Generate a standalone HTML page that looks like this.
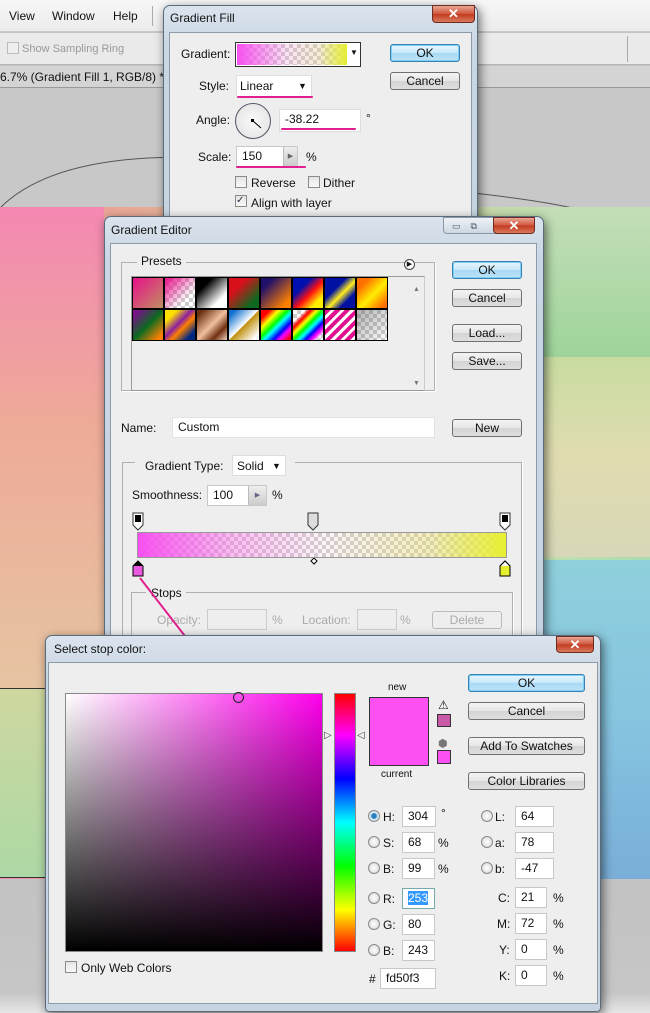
<!DOCTYPE html>
<html><head><meta charset="utf-8"><style>
*{margin:0;padding:0;box-sizing:border-box}
body{width:650px;height:1013px;position:relative;overflow:hidden;font-family:"Liberation Sans",sans-serif;font-size:12px;color:#111;background:#c4c4c4}
.a{position:absolute}
.t{position:absolute;white-space:nowrap;line-height:14px}
.dlg{position:absolute;border:1px solid #5a6b7c;border-radius:7px 7px 4px 4px;background:linear-gradient(#dbe4ee,#c9d6e3 40px,#c6d3e0);box-shadow:2px 3px 10px rgba(0,0,0,.55)}
.panel{position:absolute;background:#eeeeee;border:1px solid #8d9aa8}
.btn{position:absolute;height:18px;border:1px solid #707070;border-radius:3px;background:linear-gradient(#f4f4f4,#e6e6e6 50%,#d4d4d4 51%,#dedede);text-align:center;line-height:16px;font-size:12px}
.btn.ok{border-color:#3c7fb1;background:linear-gradient(#e8f6fd,#c7e8fa 50%,#a7d8f5 51%,#bfe3f7);box-shadow:0 0 0 1px #7ad0f5 inset}
.inp{position:absolute;background:#fff;border:1px solid #c8c8c8;height:21px;line-height:19px;padding-left:5px}
.cb{position:absolute;width:12px;height:12px;border:1px solid #8a8a8a;background:linear-gradient(#e4e4e4,#fafafa)}
.close{position:absolute;width:43px;height:18px;border:1px solid #6d2a1f;border-radius:0 0 4px 4px;background:linear-gradient(#e8a593,#d0553c 50%,#c23a20 51%,#d9795d);color:#fff;font-weight:bold;text-align:center;line-height:16px;font-size:13px}
.rad{position:absolute;width:12px;height:12px;border-radius:50%;border:1px solid #8a8a8a;background:radial-gradient(#fff,#d4d4d4)}
.grp{position:absolute;border:1px solid #b0b0b0;box-shadow:1px 1px 0 #fff}
.ck{background-image:repeating-conic-gradient(#ccc 0 25%,#fff 0 50%);background-size:8px 8px}
.sw{position:absolute;width:32px;height:32px;border:1px solid #000}
.ul{position:absolute;height:2px;background:#e0208f;border-radius:1px}
</style></head><body>
<div class="a" style="left:0;top:0;width:650px;height:32px;background:linear-gradient(#f7f7f7,#ececec);border-bottom:1px solid #c9c9c9"></div>
<div class="t" style="left:9px;top:9px">View</div><div class="t" style="left:52px;top:9px">Window</div><div class="t" style="left:113px;top:9px">Help</div>
<div class="a" style="left:152px;top:6px;width:1px;height:20px;background:#aaa"></div>
<div class="a" style="left:0;top:33px;width:650px;height:32px;background:#eaeaea;border-bottom:1px solid #b5b5b5"></div>
<div class="cb" style="left:7px;top:42px;background:#eee;border-color:#bbb"></div>
<div class="t" style="left:22px;top:42px;color:#999;font-size:11px">Show Sampling Ring</div>
<div class="a" style="left:627px;top:36px;width:1px;height:26px;background:#aaa"></div>
<div class="a" style="left:0;top:66px;width:650px;height:22px;background:#d4d4d4;border-bottom:1px solid #999"></div>
<div class="t" style="left:0;top:70px;font-size:12px">6.7% (Gradient Fill 1, RGB/8) *</div>
<div class="a" style="left:0;top:88px;width:650px;height:120px;background:#c8c8c8"></div>
<svg class="a" style="left:0;top:88px" width="650" height="120"><path d="M0 120 C 60 60 200 60 330 85 S 520 100 650 140" fill="none" stroke="#555" stroke-width="1"/></svg>
<div class="a" style="left:0;top:207px;width:650px;height:672px;background:linear-gradient(90deg,#f38ab0 0%,#eaa895 18%,#d8c8a0 50%,#bfe0b0 85%,#a8dcb0 100%)"></div>
<div class="a" style="left:0;top:207px;width:104px;height:481px;background:linear-gradient(#f488b3,#eeaa98 45%,#e6c4a2 100%)"></div>
<div class="a" style="left:0;top:688px;width:60px;height:190px;background:linear-gradient(#cfd7a0,#acd8a5);border-top:1px solid #333;border-bottom:1px solid #333"></div>
<div class="a" style="left:540px;top:207px;width:110px;height:150px;background:linear-gradient(#c4deb8,#9ed49a)"></div>
<div class="a" style="left:540px;top:357px;width:110px;height:200px;background:linear-gradient(#c8dca0,#e0dcb0 50%,#d8d8b8)"></div>
<div class="a" style="left:540px;top:560px;width:110px;height:320px;background:linear-gradient(#8fd0dc,#86c4e0 50%,#7aaed8)"></div>
<div class="a" style="left:0;top:879px;width:650px;height:134px;background:linear-gradient(#c3c3c3,#c6c6c6 85%,#e6e6e6)"></div>

<div class="dlg" style="left:163px;top:5px;width:315px;height:230px"></div>
<div class="t" style="left:170px;top:11px">Gradient Fill</div>
<div class="close" style="left:432px;top:5px">✕</div>
<div class="panel" style="left:169px;top:32px;width:303px;height:200px"></div>
<div class="t" style="left:181px;top:47px">Gradient:</div>
<div class="a" style="left:235px;top:42px;width:126px;height:25px;border:1px solid #333;background:#fff"></div>
<div class="a ck" style="left:237px;top:44px;width:110px;height:21px"></div>
<div class="a" style="left:237px;top:44px;width:110px;height:21px;background:linear-gradient(90deg,#f850f0,rgba(240,160,220,.3) 45%,rgba(230,210,150,.4) 75%,#e6ee30)"></div>
<div class="t" style="left:350px;top:46px;font-size:8px">▼</div>
<div class="btn ok" style="left:390px;top:44px;width:70px">OK</div>
<div class="btn" style="left:390px;top:72px;width:70px">Cancel</div>
<div class="t" style="left:199px;top:79px">Style:</div>
<div class="a" style="left:236px;top:75px;width:76px;height:22px;background:#fff;border:1px solid #ddd"></div>
<div class="t" style="left:240px;top:79px">Linear</div>
<div class="t" style="left:298px;top:79px;font-size:9px">▼</div>
<div class="ul" style="left:237px;top:96px;width:76px"></div>
<div class="t" style="left:196px;top:113px">Angle:</div>
<div class="a" style="left:235px;top:103px;width:36px;height:36px;border-radius:50%;border:1px solid #556;background:radial-gradient(#fafafa,#e0e0e0)"></div>
<svg class="a" style="left:235px;top:103px" width="36" height="36"><line x1="17" y1="17" x2="26" y2="25" stroke="#000" stroke-width="1"/><rect x="16" y="16" width="3" height="3" fill="#000"/></svg>
<div class="inp" style="left:279px;top:109px;width:82px;height:23px;border-color:#ddd">-38.22</div>
<div class="ul" style="left:281px;top:128px;width:75px"></div>
<div class="t" style="left:366px;top:111px">°</div>
<div class="t" style="left:198px;top:150px">Scale:</div>
<div class="inp" style="left:236px;top:146px;width:62px">150</div>
<div class="a" style="left:283px;top:147px;width:14px;height:19px;background:linear-gradient(#eee,#ccc);border-left:1px solid #bbb;font-size:7px;color:#666;text-align:center;line-height:19px">▶</div>
<div class="ul" style="left:236px;top:166px;width:70px"></div>
<div class="t" style="left:306px;top:150px">%</div>
<div class="cb" style="left:235px;top:176px"></div><div class="t" style="left:251px;top:176px">Reverse</div>
<div class="cb" style="left:308px;top:176px"></div><div class="t" style="left:323px;top:176px">Dither</div>
<div class="cb" style="left:235px;top:195px;font-size:10px;line-height:10px;color:#234">✓</div><div class="t" style="left:251px;top:196px">Align with layer</div>

<div class="dlg" style="left:104px;top:216px;width:440px;height:430px"></div>
<div class="t" style="left:111px;top:223px">Gradient Editor</div>
<div class="a" style="left:443px;top:217px;width:58px;height:17px;border:1px solid #8798ab;border-radius:0 0 0 4px;background:linear-gradient(#eef2f6,#cdd7e2)"></div>
<div class="t" style="left:452px;top:219px;font-size:9px;color:#456">▭ &nbsp;&nbsp; ⧉</div>
<div class="close" style="left:493px;top:217px;width:42px;height:17px">✕</div>
<div class="panel" style="left:110px;top:243px;width:427px;height:400px"></div>
<div class="grp" style="left:121px;top:262px;width:314px;height:129px"></div>
<div class="a" style="left:137px;top:254px;background:#eee;padding:0 4px" ><span class="t" style="position:static">Presets</span></div>
<div class="a" style="left:404px;top:259px;width:11px;height:11px;border-radius:50%;border:1px solid #444;background:#fff;font-size:7px;line-height:9px;text-align:center">▶</div>
<div class="a" style="left:131px;top:276px;width:294px;height:115px;background:#eee;border:1px solid #999;border-right-color:#ccc"></div>
<div class="t" style="left:413px;top:283px;font-size:7px;color:#777">▲</div>
<div class="t" style="left:413px;top:377px;font-size:7px;color:#777">▼</div>
<div class="sw" style="left:132px;top:277px;background:linear-gradient(135deg,#e8108a,#c09060)"></div>
<div class="sw ck" style="left:164px;top:277px"></div><div class="sw" style="left:164px;top:277px;background:linear-gradient(135deg,#e8108a,rgba(232,16,138,0) 70%)"></div>
<div class="sw" style="left:196px;top:277px;background:linear-gradient(135deg,#000 25%,#fff 75%)"></div>
<div class="sw" style="left:228px;top:277px;background:linear-gradient(135deg,#d8101a 30%,#106820 80%)"></div>
<div class="sw" style="left:260px;top:277px;background:linear-gradient(135deg,#20106a 20%,#ff8000 85%)"></div>
<div class="sw" style="left:292px;top:277px;background:linear-gradient(135deg,#0010b0 30%,#ff1010 55%,#ffee00 80%)"></div>
<div class="sw" style="left:324px;top:277px;background:linear-gradient(135deg,#0010a0 35%,#ffee20 55%,#0010a0 75%)"></div>
<div class="sw" style="left:356px;top:277px;background:linear-gradient(135deg,#ff7000 20%,#ffee00 55%,#ff7000 90%)"></div>
<div class="sw" style="left:132px;top:309px;background:linear-gradient(135deg,#7a108a 10%,#0a6a20 50%,#ff8000 90%)"></div>
<div class="sw" style="left:164px;top:309px;background:linear-gradient(135deg,#ffe000 20%,#8a20a0 45%,#ff8000 60%,#002880 85%)"></div>
<div class="sw" style="left:196px;top:309px;background:linear-gradient(135deg,#6a3010 10%,#f0c0a0 50%,#703010 75%,#f0d0c0)"></div>
<div class="sw" style="left:228px;top:309px;background:linear-gradient(135deg,#1070d0 10%,#ffffff 49%,#c09010 51%,#fff 90%)"></div>
<div class="sw" style="left:260px;top:309px;background:linear-gradient(135deg,#f00 15%,#ff0 30%,#0f0 45%,#0ff 55%,#00f 70%,#f0f 80%,#f00 95%)"></div>
<div class="sw ck" style="left:292px;top:309px"></div><div class="sw" style="left:292px;top:309px;background:linear-gradient(135deg,transparent 20%,#f00 30%,#ff0 40%,#0f0 50%,#0ff 60%,#00f 70%,#f0f 80%,transparent 90%)"></div>
<div class="sw" style="left:324px;top:309px;background:repeating-linear-gradient(135deg,#e01090 0 4px,#fff 4px 7px)"></div>
<div class="sw ck" style="left:356px;top:309px"></div><div class="sw" style="left:356px;top:309px;background:linear-gradient(135deg,rgba(100,100,100,.5),transparent)"></div>
<div class="btn ok" style="left:452px;top:261px;width:70px">OK</div>
<div class="btn" style="left:452px;top:289px;width:70px">Cancel</div>
<div class="btn" style="left:452px;top:324px;width:70px">Load...</div>
<div class="btn" style="left:452px;top:352px;width:70px">Save...</div>
<div class="t" style="left:121px;top:421px">Name:</div>
<div class="inp" style="left:172px;top:417px;width:263px;border-color:#e2e2e2">Custom</div>
<div class="btn" style="left:452px;top:419px;width:70px">New</div>
<div class="grp" style="left:122px;top:462px;width:400px;height:190px;border-bottom:none"></div>
<div class="a" style="left:135px;top:454px;width:160px;height:24px;background:#eee"></div>
<div class="t" style="left:145px;top:459px">Gradient Type:</div>
<div class="a" style="left:232px;top:455px;width:54px;height:21px;background:#fff;border:1px solid #ddd"></div>
<div class="t" style="left:237px;top:459px">Solid</div><div class="t" style="left:272px;top:459px;font-size:9px">▼</div>
<div class="t" style="left:132px;top:488px">Smoothness:</div>
<div class="inp" style="left:207px;top:485px;width:60px">100</div>
<div class="a" style="left:248px;top:486px;width:18px;height:19px;background:linear-gradient(#eee,#ccc);border-left:1px solid #bbb;font-size:7px;color:#668;text-align:center;line-height:19px">▶</div>
<div class="t" style="left:272px;top:488px">%</div>
<svg class="a" style="left:130px;top:512px" width="390" height="70">
<g stroke="#333" fill="#fff"><path d="M3 1h10v12l-5 5-5-5z"/><path d="M178 1h10v12l-5 5-5-5z" fill="#ddd"/><path d="M370 1h10v12l-5 5-5-5z"/></g>
<rect x="5" y="3" width="6" height="7" fill="#000"/><rect x="372" y="3" width="6" height="7" fill="#000"/>
<path d="M184 46l3 3-3 3-3-3z" fill="#fff" stroke="#000"/>
<path d="M3 64V54l5-5 5 5v10z" fill="#e858e0" stroke="#000"/><path d="M3 54l5-5 5 5z" fill="#000"/>
<path d="M370 64V54l5-5 5 5v10z" fill="#e6ee30" stroke="#000"/><path d="M370 54l5-5 5 5" fill="#fff" stroke="#000"/>
</svg>
<div class="a ck" style="left:137px;top:532px;width:370px;height:26px;border:1px solid #666"></div>
<div class="a" style="left:137px;top:532px;width:370px;height:26px;border:1px solid #999;background:linear-gradient(90deg,#f850f0,rgba(248,120,230,.5) 25%,rgba(240,200,220,.2) 50%,rgba(230,220,120,.5) 80%,#e8f030)"></div>
<div class="grp" style="left:131px;top:592px;width:382px;height:60px"></div>
<div class="a" style="left:146px;top:585px;width:40px;height:16px;background:#eee"></div>
<div class="t" style="left:151px;top:586px">Stops</div>
<div class="t" style="left:157px;top:613px;color:#aaa">Opacity:</div>
<div class="a" style="left:207px;top:609px;width:60px;height:21px;border:1px solid #ccc"></div>
<div class="t" style="left:272px;top:613px;color:#aaa">%</div>
<div class="t" style="left:302px;top:613px;color:#aaa">Location:</div>
<div class="a" style="left:357px;top:609px;width:40px;height:21px;border:1px solid #ccc"></div>
<div class="t" style="left:400px;top:613px;color:#aaa">%</div>
<div class="a" style="left:432px;top:611px;width:70px;height:18px;border:1px solid #bbb;border-radius:3px;color:#aaa;text-align:center;line-height:16px">Delete</div>

<svg class="a" style="left:0;top:0" width="650" height="1013"><path d="M140 578L226 689" stroke="#e0208f" stroke-width="2"/><path d="M217 683L229 693 227 677" fill="none" stroke="#e0208f" stroke-width="2"/></svg>

<div class="dlg" style="left:45px;top:635px;width:556px;height:377px"></div>
<div class="t" style="left:54px;top:642px">Select stop color:</div>
<div class="close" style="left:556px;top:636px;width:38px;height:17px">✕</div>
<div class="panel" style="left:48px;top:662px;width:550px;height:342px"></div>
<div class="a" style="left:65px;top:693px;width:258px;height:259px;border:1px solid #888;background:linear-gradient(to top,#000,rgba(0,0,0,0)),linear-gradient(90deg,#fff,#ff00ec)"></div>
<div class="a" style="left:233px;top:692px;width:11px;height:11px;border:1px solid #222;border-radius:50%"></div>
<div class="a" style="left:334px;top:693px;width:22px;height:259px;border:1px solid #888;background:linear-gradient(#f00,#f0f 16%,#00f 33%,#0ff 50%,#0f0 67%,#ff0 84%,#f00)"></div>
<div class="t" style="left:324px;top:729px;font-size:10px;color:#444">▷</div>
<div class="t" style="left:357px;top:729px;font-size:10px;color:#444">◁</div>
<div class="t" style="left:388px;top:681px;font-size:10px">new</div>
<div class="a" style="left:369px;top:697px;width:60px;height:69px;border:1px solid #333;background:#fd50f3"></div>
<div class="t" style="left:381px;top:768px;font-size:10px">current</div>
<div class="t" style="left:438px;top:698px;font-size:12px">⚠</div>
<div class="a" style="left:437px;top:714px;width:14px;height:13px;border:1px solid #333;background:#c95aa8"></div>
<div class="t" style="left:438px;top:737px;font-size:11px;color:#777">⬢</div>
<div class="a" style="left:437px;top:750px;width:14px;height:14px;border:1px solid #333;background:#fd50f3"></div>
<div class="btn ok" style="left:468px;top:674px;width:117px">OK</div>
<div class="btn" style="left:468px;top:702px;width:117px">Cancel</div>
<div class="btn" style="left:468px;top:737px;width:117px">Add To Swatches</div>
<div class="btn" style="left:468px;top:772px;width:117px">Color Libraries</div>

<div class="rad" style="left:368px;top:810px;background:radial-gradient(#2a7fbf 35%,#cfe4f3 45%,#e8e8e8)"></div><div class="t" style="left:383px;top:810px">H:</div><div class="inp" style="left:402px;top:806px;width:34px">304</div><div class="t" style="left:441px;top:806px">°</div>
<div class="rad" style="left:368px;top:836px"></div><div class="t" style="left:383px;top:836px">S:</div><div class="inp" style="left:402px;top:832px;width:33px">68</div><div class="t" style="left:438px;top:836px">%</div>
<div class="rad" style="left:368px;top:862px"></div><div class="t" style="left:383px;top:862px">B:</div><div class="inp" style="left:402px;top:858px;width:33px">99</div><div class="t" style="left:438px;top:862px">%</div>
<div class="rad" style="left:368px;top:892px"></div><div class="t" style="left:383px;top:892px">R:</div><div class="inp" style="left:402px;top:888px;width:33px;border-color:#7aa"><span style="background:#3399ff;color:#fff">253</span></div>
<div class="rad" style="left:368px;top:918px"></div><div class="t" style="left:383px;top:918px">G:</div><div class="inp" style="left:402px;top:914px;width:33px">80</div>
<div class="rad" style="left:368px;top:944px"></div><div class="t" style="left:383px;top:944px">B:</div><div class="inp" style="left:402px;top:940px;width:33px">243</div>
<div class="t" style="left:369px;top:972px">#</div><div class="inp" style="left:380px;top:968px;width:56px">fd50f3</div>
<div class="rad" style="left:481px;top:810px"></div><div class="t" style="left:495px;top:810px">L:</div><div class="inp" style="left:515px;top:806px;width:39px">64</div>
<div class="rad" style="left:481px;top:836px"></div><div class="t" style="left:495px;top:836px">a:</div><div class="inp" style="left:515px;top:832px;width:39px">78</div>
<div class="rad" style="left:481px;top:862px"></div><div class="t" style="left:495px;top:862px">b:</div><div class="inp" style="left:515px;top:858px;width:39px">-47</div>
<div class="t" style="left:498px;top:891px">C:</div><div class="inp" style="left:515px;top:887px;width:32px">21</div><div class="t" style="left:553px;top:891px">%</div>
<div class="t" style="left:497px;top:917px">M:</div><div class="inp" style="left:515px;top:913px;width:32px">72</div><div class="t" style="left:553px;top:917px">%</div>
<div class="t" style="left:499px;top:943px">Y:</div><div class="inp" style="left:515px;top:939px;width:32px">0</div><div class="t" style="left:553px;top:943px">%</div>
<div class="t" style="left:499px;top:969px">K:</div><div class="inp" style="left:515px;top:965px;width:32px">0</div><div class="t" style="left:553px;top:969px">%</div>
<div class="cb" style="left:65px;top:961px"></div><div class="t" style="left:81px;top:961px">Only Web Colors</div>
</body></html>
